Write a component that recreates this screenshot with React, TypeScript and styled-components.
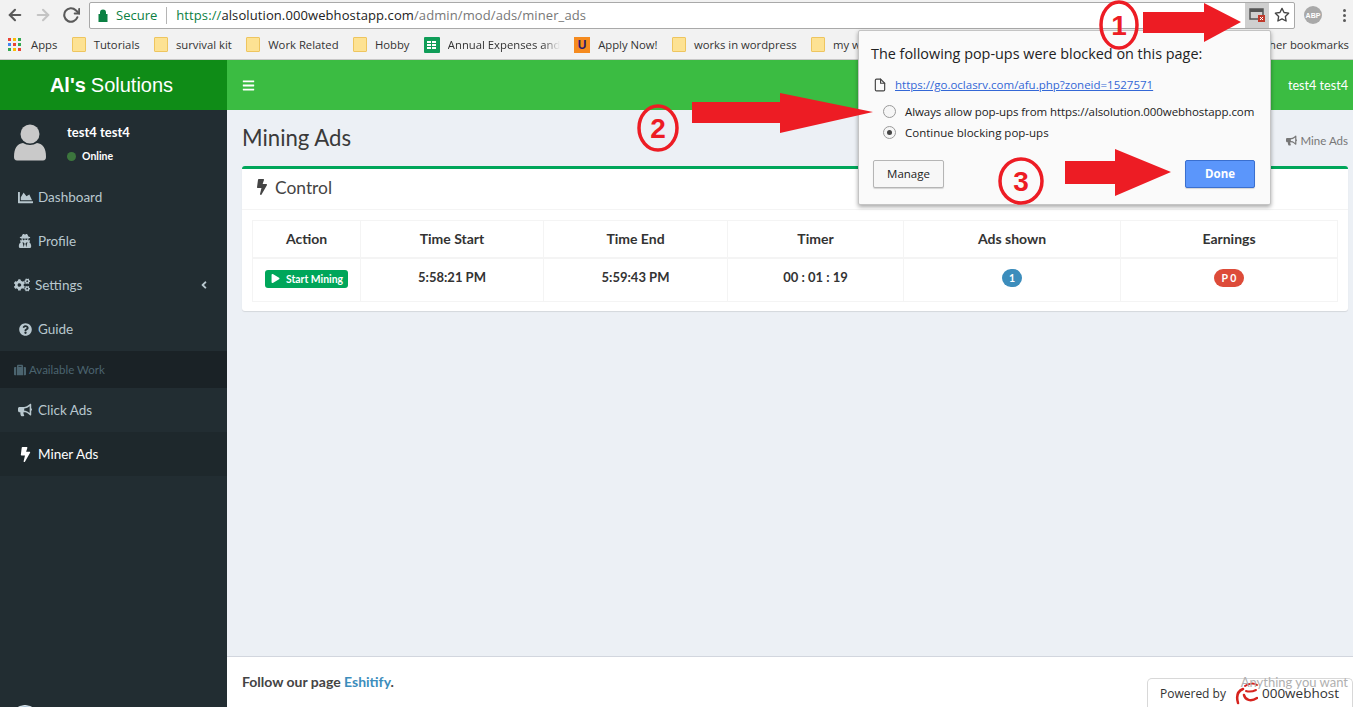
import styled, { createGlobalStyle } from "styled-components";
import { FaBars, FaBolt, FaSuitcase, FaBullhorn, FaChartArea, FaCogs, FaPlay, FaQuestionCircle, FaUserSecret, FaAngleLeft } from "react-icons/fa";
import { FiArrowLeft, FiArrowRight, FiRotateCw, FiStar, FiFile } from "react-icons/fi";

const pageFont = `"Lato", "Noto Sans", sans-serif`;
const chromeFont = `"Open Sans", "Noto Sans", sans-serif`;

const GlobalStyle = createGlobalStyle`
  html, body {
    margin: 0;
    padding: 0;
    height: 100%;
    overflow: hidden;
    background: #ecf0f5;
  }
  * {
    box-sizing: border-box;
  }
`;

const Shell = styled.div`
  position: relative;
  width: 1353px;
  height: 707px;
  overflow: hidden;
  display: flex;
  flex-direction: column;
  font-family: ${pageFont};
`;

// browser chrome
const Toolbar = styled.div`
  height: 30px;
  background: #f2f2f2;
  display: flex;
  align-items: center;
  padding: 0 0 0 1px;
  font-family: ${chromeFont};
`;
const NavButton = styled.div<{ $dim?: boolean }>`
  width: 28px;
  height: 26px;
  display: flex;
  align-items: center;
  justify-content: center;
  font-size: 18px;
  color: ${(p) => (p.$dim ? "#c4c4c4" : "#5a5a5a")};
  svg {
    stroke-width: 2.8;
  }
`;
const Omnibox = styled.div`
  width: 1206px;
  height: 27px;
  margin-left: 4px;
  background: #fff;
  border: 1px solid #a9a9a9;
  border-radius: 2px;
  display: flex;
  align-items: center;
  padding-left: 8px;
  font-size: 13px;
  position: relative;
`;
const SecureLabel = styled.span`
  color: #0b8043;
  margin-left: 8px;
  padding-right: 9px;
  border-right: 1px solid #b5b5b5;
  line-height: 17px;
`;
const Url = styled.span`
  margin-left: 9px;
  color: #777;
  letter-spacing: 0.1px;
  b {
    font-weight: 400;
    color: #222;
  }
  i {
    font-style: normal;
    color: #0b8043;
  }
`;
const BoxRight = styled.div`
  margin-left: auto;
  display: flex;
  align-items: stretch;
  height: 100%;
`;
const BlockedButton = styled.div`
  width: 24px;
  background: #cfcfcf;
  display: flex;
  align-items: center;
  justify-content: center;
`;
const StarButton = styled.div`
  width: 25px;
  display: flex;
  align-items: center;
  justify-content: center;
  font-size: 16px;
  color: #444;
`;
const AbpBadge = styled.div`
  width: 18px;
  height: 18px;
  margin-left: 9px;
  border-radius: 50%;
  background: #a9a9a9;
  color: #fff;
  font: 700 7px "Liberation Sans", sans-serif;
  display: flex;
  align-items: center;
  justify-content: center;
`;
const MenuDots = styled.div`
  margin-left: 21px;
  display: flex;
  flex-direction: column;
  gap: 2px;
  span {
    width: 3px;
    height: 3px;
    border-radius: 50%;
    background: #5a5a5a;
  }
`;

const BookmarkBar = styled.div`
  height: 30px;
  background: #f2f2f2;
  border-bottom: 1px solid #c8c8c8;
  display: flex;
  align-items: center;
  gap: 14.3px;
  padding: 0 4px 0 8px;
  font-family: ${chromeFont};
  font-size: 11.3px;
  color: #333;
  white-space: nowrap;
`;
const Bookmark = styled.div<{ $fade?: boolean }>`
  display: flex;
  align-items: center;
  gap: 8px;
  span {
    ${(p) =>
      p.$fade
        ? "width: 112px; overflow: hidden; display: block; mask-image: linear-gradient(to right, #000 85%, transparent);"
        : ""}
  }
`;
const OtherBookmarks = styled.div`
  margin-left: auto;
`;
const Folder = styled.i`
  display: block;
  width: 14px;
  height: 15px;
  background: #fde293;
  border: 1px solid #eec55f;
  border-radius: 1px;
`;
const AppsGrid = styled.div`
  display: grid;
  grid-template-columns: repeat(3, 3px);
  gap: 2px;
  margin-right: 2px;
  i {
    width: 3px;
    height: 3px;
  }
`;
const SheetIcon = styled.div`
  width: 16px;
  height: 16px;
  background: #0f9d58;
  border-radius: 1px;
  display: grid;
  grid-template-columns: repeat(2, 4px);
  grid-auto-rows: 2px;
  gap: 1px;
  justify-content: center;
  align-content: center;
  i {
    background: #fff;
  }
`;
const UIcon = styled.div`
  width: 16px;
  height: 16px;
  background: #f58b1f;
  color: #2a1a6b;
  font: 700 12px "Liberation Sans", sans-serif;
  display: flex;
  align-items: center;
  justify-content: center;
`;

// page
const Page = styled.div`
  flex: 1;
  min-height: 0;
  display: flex;
`;
const Sidebar = styled.aside`
  position: relative;
  width: 227px;
  background: #222d32;
  flex-shrink: 0;
  overflow: hidden;
`;
const Logo = styled.div`
  height: 50px;
  background: #0f8c17;
  color: #fff;
  font-family: "Liberation Sans", sans-serif;
  font-size: 20px;
  display: flex;
  align-items: center;
  justify-content: center;
  padding-right: 4px;
  b {
    margin-right: 5px;
  }
`;
const UserPanel = styled.div`
  height: 65px;
  display: flex;
  padding: 14px 0 0 13px;
  gap: 20px;
`;
const UserName = styled.div`
  color: #fff;
  font-size: 13px;
  font-weight: 700;
  line-height: 16px;
`;
const UserStatus = styled.div`
  margin-top: 10px;
  display: flex;
  align-items: center;
  gap: 6px;
  color: #fff;
  font-size: 10.5px;
  font-weight: 700;
  &::before {
    content: "";
    width: 9px;
    height: 9px;
    border-radius: 50%;
    background: #3c763d;
  }
`;
const MenuItem = styled.div<{ $active?: boolean }>`
  height: 44px;
  display: flex;
  align-items: center;
  padding-left: 14px;
  font-size: 13.5px;
  color: ${(p) => (p.$active ? "#fff" : "#b8c7ce")};
  background: ${(p) => (p.$active ? "#1e282c" : "transparent")};
`;
const MenuIcon = styled.span<{ $narrow?: boolean }>`
  width: ${(p) => (p.$narrow ? 16 : 22)}px;
  margin-right: ${(p) => (p.$narrow ? 5 : 2)}px;
  display: flex;
  justify-content: center;
`;
const MenuCaret = styled.span`
  margin-left: auto;
  margin-right: 17px;
  display: flex;
  font-size: 12px;
`;
const MenuHeader = styled.div`
  height: 37px;
  background: #1a2226;
  color: #4b646f;
  font-size: 11.5px;
  display: flex;
  align-items: center;
  gap: 3px;
  padding-left: 14px;
`;
const BottomOrb = styled.div`
  position: absolute;
  left: 10px;
  bottom: -28px;
  width: 30px;
  height: 30px;
  border-radius: 50%;
  background: #a9c3d6;
  border: 1px solid #dfe8ee;
`;

const Main = styled.main`
  flex: 1;
  min-width: 0;
  display: flex;
  flex-direction: column;
`;
const Topbar = styled.header`
  height: 50px;
  background: #3bbc42;
  color: #fff;
  display: flex;
  align-items: center;
  justify-content: space-between;
  padding: 0 5px 0 15px;
  font-size: 12.6px;
`;
const Content = styled.section`
  flex: 1;
  background: #ecf0f5;
  padding: 15px 5px 0 15px;
`;
const TitleRow = styled.div`
  height: 41px;
  display: flex;
  align-items: flex-start;
  justify-content: space-between;
`;
const PageTitle = styled.h1`
  margin: 0;
  font-size: 22.2px;
  font-weight: 400;
  line-height: 25px;
  color: #3a3a3a;
`;
const Crumb = styled.div`
  display: flex;
  align-items: center;
  gap: 4px;
  margin-top: 9px;
  font-size: 11.5px;
  color: #777;
`;
const Box = styled.div`
  background: #fff;
  border-top: 3px solid #00a65a;
  border-radius: 3px;
  box-shadow: 0 1px 1px rgba(0, 0, 0, 0.1);
  height: 145px;
`;
const BoxHeader = styled.div`
  height: 41px;
  border-bottom: 1px solid #f4f4f4;
  display: flex;
  align-items: center;
  gap: 5px;
  padding: 0 0 4px 12px;
  font-size: 17.4px;
  color: #444;
`;
const TableWrap = styled.div`
  padding: 10px;
`;
const Table = styled.table`
  width: 1085px;
  table-layout: fixed;
  border-collapse: collapse;
  color: #333;
  font-size: 14px;
  font-weight: 700;
  th, td {
    border: 1px solid #f4f4f4;
    text-align: center;
    padding: 0;
  }
  th {
    height: 37px;
    border-bottom-width: 2px;
  }
  td {
    height: 44px;
    padding-bottom: 3px;
    font-size: 13px;
  }
`;
const TimeText = styled.span`
  display: block;
  margin-bottom: 3px;
`;
const StartButton = styled.span`
  display: inline-flex;
  align-items: center;
  gap: 6px;
  height: 18px;
  padding: 0 5px 0 6px;
  border-radius: 3px;
  background: #00a65a;
  color: #fff;
  font-size: 10.4px;
  font-weight: 700;
  vertical-align: middle;
`;
const Badge = styled.span<{ $color: string; $wide?: boolean }>`
  display: inline-block;
  min-width: 20px;
  padding: ${(p) => (p.$wide ? "0 8px" : "0 3px")};
  line-height: 18px;
  border-radius: 10px;
  background: ${(p) => p.$color};
  color: #fff;
  font-size: 10.5px;
  font-weight: 700;
`;
const Footer = styled.footer`
  height: 51px;
  background: #fff;
  border-top: 1px solid #d2d6de;
  display: flex;
  align-items: center;
  justify-content: space-between;
  padding: 0 5px 2px 15px;
  font-size: 14px;
  font-weight: 700;
  color: #444;
  a {
    color: #3c8dbc;
    text-decoration: none;
  }
`;
const Tagline = styled.span`
  position: relative;
  z-index: 2;
  margin-top: 2px;
  font-size: 13px;
  font-weight: 400;
  color: #b0b0b0;
`;
const PoweredBy = styled.div`
  position: absolute;
  right: 0;
  bottom: 0;
  width: 206px;
  height: 29px;
  background: #fff;
  border: 1px solid #d8d8d8;
  border-bottom: none;
  border-radius: 5px 5px 0 0;
  display: flex;
  align-items: center;
  padding-left: 12px;
  gap: 4px;
  font-family: "Open Sans", sans-serif;
  font-size: 12px;
  color: #333;
  svg {
    margin-left: 4px;
  }
  strong {
    font-weight: 400;
    font-size: 13.5px;
  }
`;

// blocked pop-ups bubble
const Bubble = styled.div`
  position: absolute;
  left: 858px;
  top: 30px;
  width: 413px;
  height: 175px;
  background: #fafafa;
  border: 1px solid #c4c4c4;
  border-radius: 2px;
  box-shadow: 0 2px 4px rgba(0, 0, 0, 0.35);
  padding: 13px 15px 0 14px;
  font-family: ${chromeFont};
  color: #222;
  font-size: 11.5px;
`;
const BubbleTitle = styled.div`
  font-size: 14.4px;
  line-height: 19px;
  margin-left: -2px;
  white-space: nowrap;
`;
const BlockedLink = styled.a`
  display: flex;
  align-items: center;
  gap: 8px;
  margin-top: 13px;
  color: #3367d6;
  text-decoration: underline;
  line-height: 17px;
  svg {
    color: #444;
    font-size: 14px;
  }
`;
const RadioRow = styled.div<{ $first?: boolean }>`
  display: flex;
  align-items: center;
  gap: 9px;
  margin: ${(p) => (p.$first ? "10px" : "5px")} 0 0 10px;
  height: 16px;
  white-space: nowrap;
  letter-spacing: ${(p) => (p.$first ? "-0.08px" : "0")};
`;
const Radio = styled.span<{ $on?: boolean }>`
  flex-shrink: 0;
  width: 13px;
  height: 13px;
  border-radius: 50%;
  border: 1px solid #9a9a9a;
  background: #f6f6f6;
  display: flex;
  align-items: center;
  justify-content: center;
  &::after {
    content: "";
    width: 5px;
    height: 5px;
    border-radius: 50%;
    background: ${(p) => (p.$on ? "#444" : "transparent")};
  }
`;
const BubbleActions = styled.div`
  margin-top: 20px;
  display: flex;
  justify-content: space-between;
`;
const ManageButton = styled.div`
  width: 71px;
  height: 28px;
  padding-bottom: 2px;
  border: 1px solid #b5b5b5;
  border-radius: 2px;
  background: #f7f7f7;
  box-shadow: 0 1px 1px rgba(0, 0, 0, 0.15);
  display: flex;
  align-items: center;
  justify-content: center;
`;
const DoneButton = styled(ManageButton)`
  width: 70px;
  background: #5b96fb;
  border-color: #3a6fcf;
  color: #fff;
  font-weight: 700;
`;

// hand drawn marks on top of the screenshot
const Marks = styled.svg`
  position: absolute;
  left: 0;
  top: 0;
  pointer-events: none;
`;
const MarkNumber = styled.text`
  font-family: "Liberation Sans", sans-serif;
  font-weight: 700;
  font-size: 28px;
  fill: #ed1c24;
  text-anchor: middle;
`;

const appColors = ["#ea4335", "#fbbc05", "#34a853", "#4285f4", "#ea4335", "#34a853", "#34a853", "#fbbc05", "#ea4335"];

const marks = [
  { n: 1, cx: 1119, cy: 25, rx: 18, ry: 23, arrow: "1143,12 1204,12 1204,3 1241,22 1204,42 1204,33 1143,33" },
  { n: 2, cx: 658, cy: 128, rx: 19, ry: 22, arrow: "692,102 780,102 780,93 873,112 780,133 780,123 692,123" },
  { n: 3, cx: 1021, cy: 181, rx: 21, ry: 22, arrow: "1065,161 1115,161 1115,149 1171,172 1115,196 1115,184 1065,184" },
];

const columns = [
  { title: "Action", width: 108 },
  { title: "Time Start", width: 183 },
  { title: "Time End", width: 184 },
  { title: "Timer", width: 176 },
  { title: "Ads shown", width: 217 },
  { title: "Earnings", width: 217 },
];

const App = () => {
  return (
    <Shell>
      <GlobalStyle />
      <Toolbar>
        <NavButton><FiArrowLeft /></NavButton>
        <NavButton $dim><FiArrowRight /></NavButton>
        <NavButton><FiRotateCw /></NavButton>
        <Omnibox>
          <svg width="10" height="13" viewBox="0 0 10 13">
            <path d="M2 5V3.500a3 3 0 0 1 6 0V5h1.500v8H.5V5z" fill="#0b8043" />
          </svg>
          <SecureLabel>Secure</SecureLabel>
          <Url><i>https://</i><b>alsolution.000webhostapp.com</b>/admin/mod/ads/miner_ads</Url>
          <BoxRight>
            <BlockedButton>
              <svg width="16" height="14" viewBox="0 0 16 14">
                <rect x="1" y="1" width="13" height="10" fill="none" stroke="#555" strokeWidth="1.5" />
                <rect x="1" y="1" width="13" height="3" fill="#555" />
                <rect x="9" y="7" width="7" height="7" fill="#c0392b" />
                <path d="M11 9l3 3m0-3l-3 3" stroke="#fff" strokeWidth="1" />
              </svg>
            </BlockedButton>
            <StarButton><FiStar /></StarButton>
          </BoxRight>
        </Omnibox>
        <AbpBadge>ABP</AbpBadge>
        <MenuDots><span /><span /><span /></MenuDots>
      </Toolbar>
      <BookmarkBar>
        <Bookmark>
          <AppsGrid>{appColors.map((c, i) => <i key={i} style={{ background: c }} />)}</AppsGrid>
          <span>Apps</span>
        </Bookmark>
        <Bookmark><Folder /><span>Tutorials</span></Bookmark>
        <Bookmark><Folder /><span>survival kit</span></Bookmark>
        <Bookmark><Folder /><span>Work Related</span></Bookmark>
        <Bookmark><Folder /><span>Hobby</span></Bookmark>
        <Bookmark $fade><SheetIcon><i /><i /><i /><i /><i /><i /></SheetIcon><span>Annual Expenses and</span></Bookmark>
        <Bookmark><UIcon>U</UIcon><span>Apply Now!</span></Bookmark>
        <Bookmark><Folder /><span>works in wordpress</span></Bookmark>
        <Bookmark><Folder /><span>my w</span></Bookmark>
        <OtherBookmarks>Other bookmarks</OtherBookmarks>
      </BookmarkBar>
      <Page>
        <Sidebar>
          <Logo><b>Al's</b> Solutions</Logo>
          <UserPanel>
            <svg width="34" height="37" viewBox="0 0 34 37">
              <circle cx="17" cy="10" r="9.5" fill="#c9c9c9" />
              <path d="M1 33c0-9 3-13 9-14 4 2.500 10 2.500 14 0 6 1 9 5 9 14 0 2-1 3.500-3 3.500H4c-2 0-3-1.500-3-3.500z" fill="#c9c9c9" />
            </svg>
            <div>
              <UserName>test4 test4</UserName>
              <UserStatus>Online</UserStatus>
            </div>
          </UserPanel>
          <MenuItem><MenuIcon><FaChartArea size={15} /></MenuIcon>Dashboard</MenuItem>
          <MenuItem><MenuIcon><FaUserSecret size={14} /></MenuIcon>Profile</MenuItem>
          <MenuItem><MenuIcon $narrow><FaCogs size={16} /></MenuIcon>Settings<MenuCaret><FaAngleLeft /></MenuCaret></MenuItem>
          <MenuItem><MenuIcon><FaQuestionCircle size={13} /></MenuIcon>Guide</MenuItem>
          <MenuHeader><FaSuitcase size={12} />Available Work</MenuHeader>
          <MenuItem><MenuIcon><FaBullhorn size={14} /></MenuIcon>Click Ads</MenuItem>
          <MenuItem $active><MenuIcon><FaBolt size={15} /></MenuIcon>Miner Ads</MenuItem>
          <BottomOrb />
        </Sidebar>
        <Main>
          <Topbar>
            <FaBars size={13} />
            <span>test4 test4</span>
          </Topbar>
          <Content>
            <TitleRow>
              <PageTitle>Mining Ads</PageTitle>
              <Crumb><FaBullhorn size={11} />Mine Ads</Crumb>
            </TitleRow>
            <Box>
              <BoxHeader><FaBolt size={16} />Control</BoxHeader>
              <TableWrap>
                <Table>
                  <colgroup>
                    {columns.map((c) => <col key={c.title} width={c.width} />)}
                  </colgroup>
                  <thead>
                    <tr>{columns.map((c) => <th key={c.title}>{c.title}</th>)}</tr>
                  </thead>
                  <tbody>
                    <tr>
                      <td><StartButton><FaPlay size={9} />Start Mining</StartButton></td>
                      <td><TimeText>5:58:21 PM</TimeText></td>
                      <td><TimeText>5:59:43 PM</TimeText></td>
                      <td><TimeText>00 : 01 : 19</TimeText></td>
                      <td><Badge $color="#3c8dbc">1</Badge></td>
                      <td><Badge $color="#dd4b39" $wide>P 0</Badge></td>
                    </tr>
                  </tbody>
                </Table>
              </TableWrap>
            </Box>
          </Content>
          <Footer>
            <span>Follow our page <a href="#">Eshitify</a>.</span>
            <Tagline>Anything you want</Tagline>
          </Footer>
        </Main>
      </Page>
      <PoweredBy>
        Powered by
        <svg width="24" height="23" viewBox="0 0 24 23" fill="none" stroke="#d6231e" strokeLinecap="round">
          <path d="M11 4c4-3 9-3 12-1" strokeWidth="2" />
          <path d="M9 7C4 9 2 14 4 21" strokeWidth="2.500" />
          <path d="M10 13c1 5 7 7 13 3" strokeWidth="2.500" />
          <path d="M12 9c3 1 6 1 10-1" strokeWidth="2" />
        </svg>
        <strong>000webhost</strong>
      </PoweredBy>
      <Bubble>
        <BubbleTitle>The following pop-ups were blocked on this page:</BubbleTitle>
        <BlockedLink href="#"><FiFile />https://go.oclasrv.com/afu.php?zoneid=1527571</BlockedLink>
        <RadioRow $first><Radio />Always allow pop-ups from https://alsolution.000webhostapp.com</RadioRow>
        <RadioRow><Radio $on />Continue blocking pop-ups</RadioRow>
        <BubbleActions>
          <ManageButton>Manage</ManageButton>
          <DoneButton>Done</DoneButton>
        </BubbleActions>
      </Bubble>
      <Marks width="1353" height="707">
        {marks.map((m) => (
          <g key={m.n}>
            <polygon points={m.arrow} fill="#ed1c24" />
            <ellipse cx={m.cx} cy={m.cy} rx={m.rx} ry={m.ry} fill="none" stroke="#ed1c24" strokeWidth="3.5" />
            <MarkNumber x={m.cx} y={m.cy + 10}>{m.n}</MarkNumber>
          </g>
        ))}
      </Marks>
    </Shell>
  );
};

export default App;
